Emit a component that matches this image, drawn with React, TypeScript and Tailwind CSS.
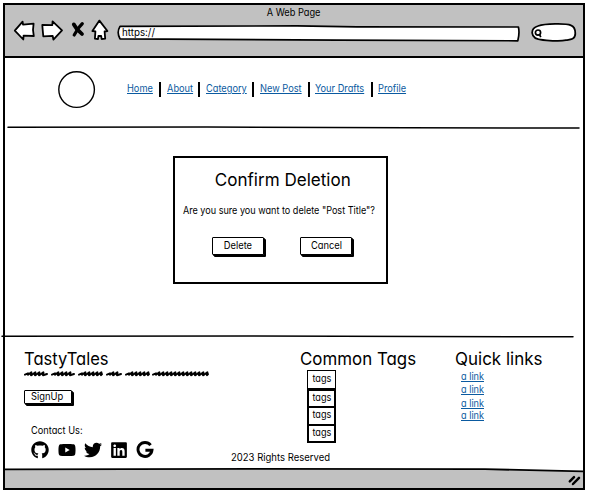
import type { ReactNode } from "react";
import { FaGithub, FaYoutube, FaTwitter, FaLinkedin } from "react-icons/fa";

function Narrow({ children, className = "scale-x-[0.88] origin-left" }: { children: ReactNode; className?: string }) {
  return <span className={`inline-block whitespace-nowrap ${className}`}>{children}</span>;
}

function Toolbar() {
  return (
    <div className="flex h-[24px] items-start pl-[8px]">
      <svg width="22" height="24" viewBox="0 0 22 24" className="shrink-0 fill-white stroke-black" strokeWidth="1.8" strokeLinejoin="round">
        <path d="M1.8 11.6 L9.6 2.6 L10 5.7 L20.6 4.6 L20 11 L20.8 17 L10.6 16.6 L10.3 20.5 Z" />
      </svg>
      <svg width="22" height="24" viewBox="0 0 22 24" className="ml-[6px] shrink-0 fill-white stroke-black" strokeWidth="1.8" strokeLinejoin="round">
        <path d="M1.3 6 L11.3 6.2 L11.6 2.4 L21 11.3 L12.4 20.6 L11.7 16.9 L2.3 17.4 L1.7 11 Z" />
      </svg>
      <svg width="14" height="24" viewBox="0 0 14 24" className="ml-[8px] shrink-0 fill-none stroke-black" strokeLinecap="round">
        <path d="M2.8 5.4 L6 10.2 L11 15" strokeWidth="3.8" />
        <path d="M11.3 4.6 L7.5 9 L3.2 16" strokeWidth="3.2" />
      </svg>
      <svg width="18" height="24" viewBox="0 0 18 24" className="ml-[6px] shrink-0 fill-white stroke-black" strokeWidth="1.8" strokeLinejoin="round">
        <path d="M8.4 1.6 L16.4 12 L13.6 12.5 L14.2 19.6 L10.6 20 L10.2 17 L7.4 17 L7 20.2 L3.9 19.6 L4.4 12.4 L1.4 12 Z" />
      </svg>
      <div className="relative mt-[6px] ml-[8px] h-[17px] w-[404px] shrink-0">
        <svg width="404" height="17" className="absolute inset-0 fill-white stroke-black" strokeWidth="1.7" strokeLinejoin="round">
          <path d="M3 1.4 L180 .9 L240 1.8 L401.4 2 Q402.8 8 400.8 15.8 L220 15.2 L3 13.9 Q-.6 7.5 3 1.4 Z" />
        </svg>
        <p className="relative pt-[1px] pl-[5px] text-[10.5px] leading-[14px]">
          <Narrow className="origin-left scale-x-[0.93]">https://</Narrow>
        </p>
      </div>
      <svg width="46" height="22" viewBox="0 0 46 22" className="mt-[3px] ml-[10px] shrink-0 fill-white stroke-black" strokeWidth="1.8">
        <path d="M7 4 C14 1.6 35 1.2 40 3.4 C44.5 5 44.5 9 44.2 13 C43.5 17.2 40 17.4 35 18.2 C28 19.6 20 18.6 12 18 C5 17.6 1.5 15 1.2 11 C1 7.6 3.5 5 7 4 Z" />
        <circle cx="7" cy="10.6" r="2.6" strokeWidth="1.7" />
        <path d="M8.4 12.4 L9.8 15.2" strokeWidth="1.8" />
      </svg>
    </div>
  );
}

function Rule({ d, className }: { d: string; className: string }) {
  return (
    <svg className={`block shrink-0 fill-none stroke-black ${className}`} height="3" strokeWidth="1.5" strokeLinecap="round">
      <path d={d} />
    </svg>
  );
}

function NavLink({ width, children }: { width: string; children: ReactNode }) {
  return (
    <a className={`block shrink-0 text-[10.5px] leading-[14px] text-[#0a5aa0] ${width}`}>
      <Narrow className="origin-left scale-x-[0.88] underline underline-offset-1">{children}</Narrow>
    </a>
  );
}

function Bar() {
  return <span className="h-[15px] w-[2px] shrink-0 bg-black" />;
}

function SketchButton({ children, className }: { children: ReactNode; className: string }) {
  return (
    <button className={`flex items-center justify-center rounded-[1px] border-[1.5px] border-black bg-white text-[10.5px] leading-none ${className}`}>
      <Narrow className="scale-x-[0.89]">{children}</Narrow>
    </button>
  );
}

function Scribble() {
  const words = [
    [1, 23],
    [28, 50],
    [55, 78],
    [83, 97],
    [102, 125],
    [129, 184],
  ];
  return (
    <svg width="188" height="8" className="block fill-none stroke-black" strokeWidth="2" strokeLinejoin="round" strokeLinecap="round">
      {words.map(([a, b], i) => {
        let d = `M${a} 4.6 L${a + 3} 3.4`;
        for (let x = a + 3; x < b - 3; x += 4) d += ` L${x} 4.8 L${x + 3.4} 2.4 L${x + 3} 5.2`;
        return <path key={i} d={d + ` L${b} 4`} />;
      })}
    </svg>
  );
}

function Tag({ className }: { className: string }) {
  return (
    <li className={`flex items-center justify-center border-black leading-none ${className}`}>
      <Narrow className="scale-x-[0.87]">tags</Narrow>
    </li>
  );
}

function QuickLink({ className = "" }: { className?: string }) {
  return (
    <li className={className}>
      <Narrow className="origin-left scale-x-[0.87] underline underline-offset-1">a link</Narrow>
    </li>
  );
}

export default function App() {
  return (
    <div className="h-[494px] w-[590px] overflow-hidden bg-white pt-[3px] pl-[3px] font-['Inter','Liberation_Sans',sans-serif] text-black [font-feature-settings:'cv11']">
      <div className="flex h-[487px] w-[582px] flex-col border-2 border-black bg-white">
        <header className="h-[53px] shrink-0 border-b-2 border-black bg-[#c1c1c1]">
          <h1 className="h-[14px] pt-[1px] text-center text-[10.5px] leading-[14px]">
            <Narrow className="scale-x-[0.88]">A Web Page</Narrow>
          </h1>
          <Toolbar />
        </header>

        <div className="flex h-[68px] shrink-0 items-start">
          <svg width="38" height="38" className="mt-[13px] ml-[53px] shrink-0 fill-none stroke-black" strokeWidth="1.4">
            <circle cx="18.6" cy="18.6" r="17.8" />
          </svg>
          <nav className="mt-[24px] ml-[31px] flex items-start">
            <NavLink width="w-[32px]">Home</NavLink>
            <Bar />
            <NavLink width="ml-[6px] w-[31px]">About</NavLink>
            <Bar />
            <NavLink width="ml-[6px] w-[46px]">Category</NavLink>
            <Bar />
            <NavLink width="ml-[6px] w-[48px]">New Post</NavLink>
            <Bar />
            <NavLink width="ml-[5px] w-[56px]">Your Drafts</NavLink>
            <Bar />
            <NavLink width="ml-[5px]">Profile</NavLink>
          </nav>
        </div>
        <Rule className="ml-[2px] w-[573px]" d="M1 1.2 L200 1 L400 1.8 L572 2" />

        <main className="flex h-[206px] shrink-0 justify-center pt-[27px] pr-[28px]">
          <section className="flex h-[128px] w-[215px] flex-col items-center border-2 border-black">
            <h2 className="mt-[11px] pl-[5px] text-[17.5px] leading-[22px]">
              <Narrow className="scale-x-[0.975]">Confirm Deletion</Narrow>
            </h2>
            <p className="mt-[13px] flex w-full justify-center pr-[3px] text-[10.5px] leading-[14px]">
              <Narrow className="scale-x-[0.865]">Are you sure you want to delete "Post Title"?</Narrow>
            </p>
            <div className="mt-[19px] flex gap-[36px] pl-[4px]">
              <SketchButton className="h-[18px] w-[52px] shadow-[1px_1px_0_#000,2px_2px_0_#000]">Delete</SketchButton>
              <SketchButton className="h-[18px] w-[52px] shadow-[1px_1px_0_#000,2px_2px_0_#000]">Cancel</SketchButton>
            </div>
          </section>
        </main>
        <Rule className="-ml-[4px] w-[574px]" d="M1 1.2 L250 1 L572 1.8" />

        <footer className="flex h-[130px] shrink-0">
          <div className="w-[226px] shrink-0 pt-[10px] pl-[19px]">
            <h2 className="text-[17.5px] leading-[22px]">
              <Narrow className="origin-left scale-x-[0.945]">TastyTales</Narrow>
            </h2>
            <Scribble />
            <SketchButton className="mt-[12px] h-[14px] w-[48px] pr-px shadow-[1px_1px_0_#000,2px_2px_0_#000]">SignUp</SketchButton>
            <p className="mt-[20px] ml-[7px] text-[10.5px] leading-[14px]">
              <Narrow>Contact Us:</Narrow>
            </p>
            <div className="mt-[3px] ml-[7px] flex items-center gap-[8px]">
              <FaGithub size={18} />
              <FaYoutube size={18} className="ml-[0.5px]" />
              <FaTwitter size={18} />
              <FaLinkedin size={18} />
              <svg width="18" height="18" viewBox="0 0 18 18" className="fill-none stroke-black" strokeWidth="2.9">
                <path d="M14.6 4.2 A7 7 0 1 0 16 9.2 H9.4" />
              </svg>
            </div>
          </div>
          <div className="flex w-[224px] shrink-0 flex-col pt-[10px]">
            <h2 className="ml-[69px] text-[17.5px] leading-[22px]">
              <Narrow className="origin-left scale-x-[0.965]">Common Tags</Narrow>
            </h2>
            <ul className="ml-[76px] w-[29px] text-[10.5px]">
              <Tag className="h-[19px] border-[1.5px]" />
              <Tag className="h-[19px] border-2 pb-px" />
              <Tag className="h-[16px] border-x-2 pb-px" />
              <Tag className="h-[19px] border-2" />
            </ul>
            <p className="mt-[8px] text-[10.5px] leading-[14px]">
              <Narrow className="origin-left scale-x-[0.905]">2023 Rights Reserved</Narrow>
            </p>
          </div>
          <div className="pt-[10px]">
            <h2 className="text-[17.5px] leading-[22px]">
              <Narrow className="origin-left scale-x-[0.97]">Quick links</Narrow>
            </h2>
            <ul className="ml-[6px] text-[10.5px] leading-[13px] text-[#0a5aa0]">
              <QuickLink />
              <QuickLink />
              <QuickLink className="mt-[1px]" />
              <QuickLink className="-mt-[1px]" />
            </ul>
          </div>
        </footer>

        <div className="relative flex grow items-center justify-end bg-[#c1c1c1] pr-[2px]">
          <svg width="578" height="5" className="absolute top-0 left-0 fill-white stroke-black" strokeWidth="1.8">
            <path d="M-2 -2 L-2 1.4 L250 .9 L480 1.2 L580 3.4 L580 -2 Z" />
          </svg>
          <svg width="13" height="11" viewBox="0 0 13 11" className="mt-[4px] fill-none stroke-black" strokeWidth="2.5" strokeLinecap="round">
            <path d="M1.8 6.4 L6 2.2 M5 9 L11 2.8" />
          </svg>
        </div>
      </div>
    </div>
  );
}
